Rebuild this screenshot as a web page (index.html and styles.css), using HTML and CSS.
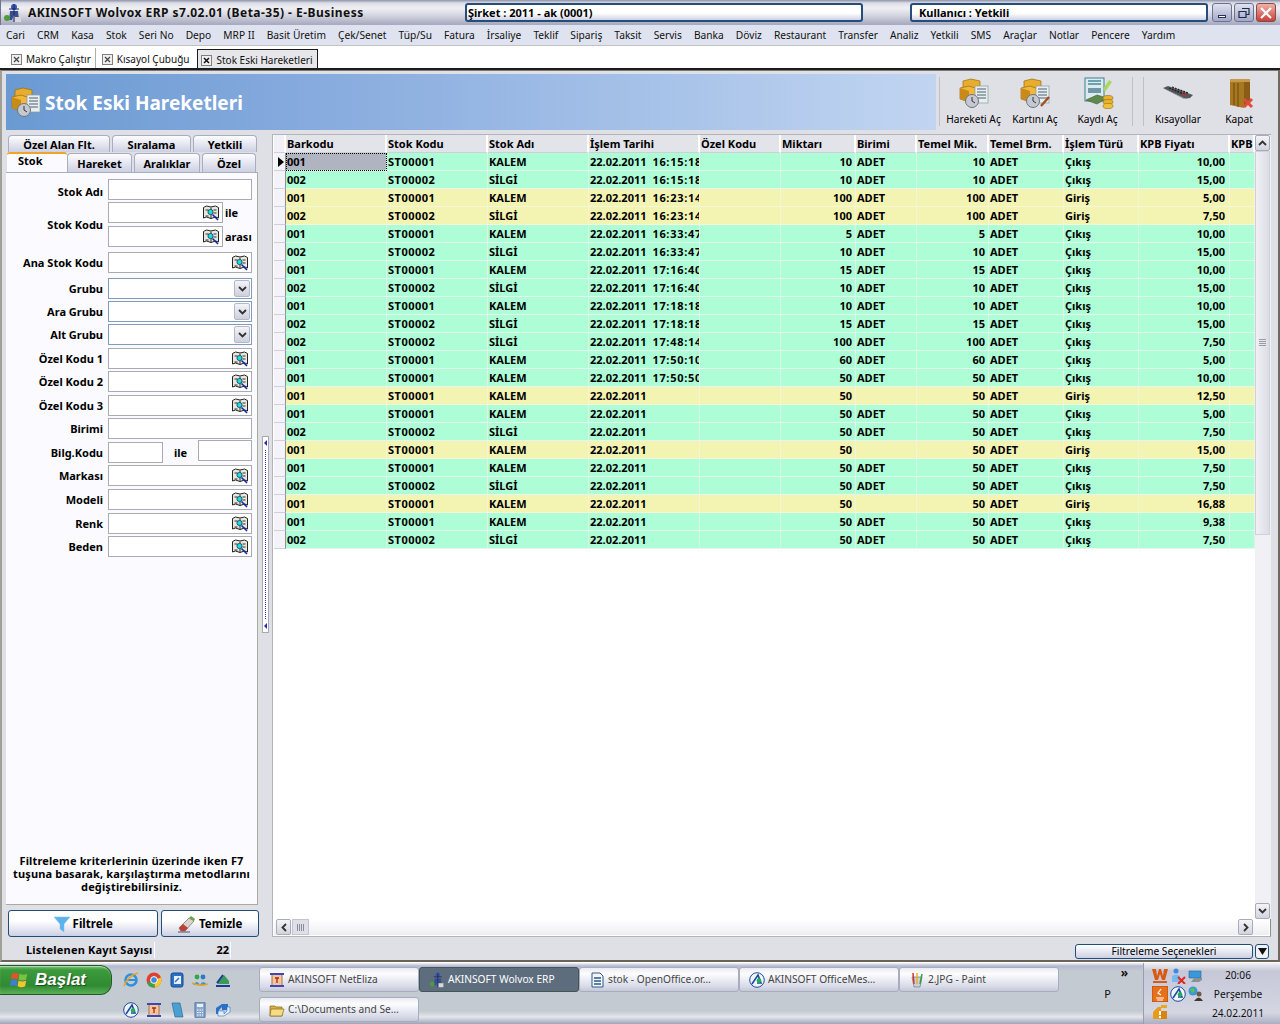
FILE: index.html
```html
<!DOCTYPE html>
<html lang="tr">
<head>
<meta charset="utf-8">
<title>AKINSOFT Wolvox ERP</title>
<link rel="stylesheet" href="styles.css">
</head>
<body>
<svg class="defs" width="0" height="0">
  <defs>
    <symbol id="i-find" viewBox="0 0 16 16">
      <path d="M.5 2.500l3-1.500 4.500 1 4.500-1 3 1.500V13l-3-1-4.500 1.500L3.500 12l-3 1z" fill="#e8e8e0" stroke="#222"/>
      <path d="M8 2.500v11M2.500 5h3M10.500 5h3M10.500 8h3M2.500 11h3" stroke="#333"/>
      <circle cx="7.500" cy="7" r="2.600" fill="#12e0ea" stroke="#222" stroke-width=".7"/>
      <path d="M9.500 9.500l5.500 5.500" stroke="#1428a8" stroke-width="1.600"/>
    </symbol>
    <symbol id="i-app" viewBox="0 0 20 20">
      <circle cx="11" cy="4" r="3" fill="#3a55b0"/>
      <path d="M7 8h8l1 9h-3l-2-5-2 5H6z" fill="#39508f"/>
      <path d="M11 1v18M6 6h10" stroke="#1b2a66"/>
      <circle cx="4" cy="15" r="3" fill="#4f9a3a"/>
      <rect x="12" y="14" width="6" height="5" fill="#d8d8d8"/>
    </symbol>
    <symbol id="i-boxes" viewBox="0 0 32 32">
      <path d="M13 2l9 2v9l-9 3-8-3V4z" fill="#e8ad2c" stroke="#9a6c10" stroke-width=".7"/>
      <path d="M2 11l9-2 9 3v10l-9 3-9-3z" fill="#f0b73a" stroke="#9a6c10" stroke-width=".7"/>
      <path d="M11 14v11l-9-3V11z" fill="#c98a1a"/>
      <rect x="17" y="9" width="13" height="17" fill="#e8eef0" stroke="#8a9aa0" stroke-width=".7"/>
      <path d="M19 12h9M19 15h9M19 18h9M19 21h9" stroke="#4a6070" stroke-width="1.200"/>
      <circle cx="14" cy="24" r="6.500" fill="#c4c8d0" stroke="#70747c"/>
      <path d="M14 20v4l3 2" stroke="#333" fill="none"/>
    </symbol>
    <symbol id="i-pen" viewBox="0 0 32 32">
      <use href="#i-boxes"/>
      <path d="M22 29l8-9" stroke="#a05020" stroke-width="2.400"/>
    </symbol>
    <symbol id="i-money" viewBox="0 0 32 32">
      <rect x="3" y="1" width="19" height="23" fill="#dcebf0" stroke="#3a8090"/>
      <path d="M6 4h13M6 7h13" stroke="#4a8a98" stroke-width="1.400"/>
      <path d="M6 11h13v5H6z" fill="#6f97a6"/>
      <path d="M21 12l6-9 3 2-7 10z" fill="#a8d860"/>
      <path d="M4 23l11-5 10 3-10 6z" fill="#5f8a4e" stroke="#3a5c30" stroke-width=".6"/>
      <ellipse cx="26" cy="21" rx="5" ry="2.600" fill="#e8b22c" stroke="#9a6c10" stroke-width=".6"/>
      <ellipse cx="26" cy="25" rx="5" ry="2.600" fill="#e8b22c" stroke="#9a6c10" stroke-width=".6"/>
      <ellipse cx="26" cy="29" rx="5" ry="2.600" fill="#f0c03a" stroke="#9a6c10" stroke-width=".6"/>
    </symbol>
    <symbol id="i-key" viewBox="0 0 32 32">
      <path d="M1 11l5-2 25 9-3 3-6 1z" fill="#55555c"/>
      <path d="M1 11l21 11 6-1-4 1z" fill="#b8b8bc"/>
      <path d="M7 11l17 7M10 10l16 6" stroke="#222" stroke-width="1.300" stroke-dasharray="2 1"/>
      <path d="M20 17l4 1.500" stroke="#c03030" stroke-width="1.400"/>
    </symbol>
    <symbol id="i-door" viewBox="0 0 32 32">
      <path d="M7 2h20v26H7z" fill="#8a5c18"/>
      <path d="M7 2l14 3v26L7 28z" fill="#a87820"/>
      <path d="M11 6v22M15 6v24" stroke="#6d4810"/>
      <path d="M7 2h20v3H7z" fill="#c69a4a"/>
      <path d="M21 22l8 8m0-8l-8 8" stroke="#e24a3a" stroke-width="3"/>
    </symbol>
    <symbol id="i-funnel" viewBox="0 0 16 16">
      <path d="M0 1h16l-6 7v8l-4-3V8z" fill="#5ab2ef" stroke="#7cc0f0" stroke-width=".5"/>
    </symbol>
    <symbol id="i-eraser" viewBox="0 0 18 18">
      <path d="M1 13l10-10 5 3-9 10H3z" fill="#d8d4cc" stroke="#555" stroke-width=".6"/>
      <path d="M11 3l2-2 4 3-1 2z" fill="#6aa838"/>
      <path d="M5 9l5 4-3 3H3l-2-3z" fill="#c04038"/>
      <path d="M0 17h12" stroke="#555"/>
    </symbol>
    <symbol id="i-win" viewBox="0 0 20 20">
      <path d="M2 3q3-2 7 0l-1 6q-4-2-7 0z" fill="#e8502a"/>
      <path d="M10 3q4 2 8 0l-1 6q-4 2-8 0z" fill="#7cc242"/>
      <path d="M1 10q3-2 7 0l-1 6q-4-2-7 0z" fill="#3d7fd8"/>
      <path d="M9 10q4 2 8 0l-1 6q-4 2-8 0z" fill="#f5c52a"/>
    </symbol>
    <symbol id="i-ie" viewBox="0 0 16 16">
      <circle cx="8" cy="8" r="5.500" fill="none" stroke="#2f8fe0" stroke-width="2.600"/>
      <path d="M3 8h10" stroke="#2f8fe0" stroke-width="2"/>
      <path d="M1 14C3 8 9 2 15 1" stroke="#e8a520" stroke-width="1.500" fill="none"/>
    </symbol>
    <symbol id="i-chrome" viewBox="0 0 16 16">
      <circle cx="8" cy="8" r="7.500" fill="#e0402f"/>
      <path d="M8 8L1 11a7.500 7.500 0 0 0 8 4.500z" fill="#3ea14a"/>
      <path d="M8 8l7-2.500a7.500 7.500 0 0 1-6 10z" fill="#f6c92d"/>
      <circle cx="8" cy="8" r="3.400" fill="#3a8ce0" stroke="#fff"/>
    </symbol>
    <symbol id="i-cal" viewBox="0 0 16 16">
      <rect x="2" y="1" width="12" height="14" rx="2" fill="#2a70c8" stroke="#184a90"/>
      <rect x="5" y="4" width="7" height="8" fill="#e8f0fa"/>
      <path d="M6 10l4-4" stroke="#2a70c8" stroke-width="1.500"/>
    </symbol>
    <symbol id="i-people" viewBox="0 0 16 16">
      <circle cx="5" cy="5" r="2.400" fill="#2fa84a"/>
      <circle cx="11" cy="5" r="2.400" fill="#2f78c8"/>
      <path d="M1 13q4-6 7 0zM8 13q3-6 7 0z" fill="#4a90c8"/>
      <path d="M0 11q8 4 16 1" stroke="#e8a520" stroke-width="1.500" fill="none"/>
    </symbol>
    <symbol id="i-tri" viewBox="0 0 16 16">
      <path d="M2 12L9 3l5 6v3z" fill="#3a9a58"/>
      <path d="M1 13h14v2H1z" fill="#1c3c90"/>
      <path d="M2 11L8 3" stroke="#1c3c90" stroke-width="2"/>
    </symbol>
    <symbol id="i-office" viewBox="0 0 16 16">
      <circle cx="8" cy="8" r="7.300" fill="#f0f4fa" stroke="#1c4ca0"/>
      <path d="M3 12L9 3l3 8H8" fill="none" stroke="#1c4ca0" stroke-width="1.600"/>
      <circle cx="10" cy="8.500" r="2.300" fill="#20b050"/>
    </symbol>
    <symbol id="i-scroll" viewBox="0 0 16 16">
      <rect x="3" y="2" width="10" height="12" fill="#f2c89a" stroke="#b07038"/>
      <path d="M1 2h14M1 14h14" stroke="#3a48c0" stroke-width="2"/>
      <path d="M6 6h4M8 6v5M6 11h.1M10 11h.1" stroke="#b02020" stroke-width="1.300"/>
    </symbol>
    <symbol id="i-note" viewBox="0 0 16 16">
      <path d="M3 1h8l3 14H6z" fill="#4aa0d0" stroke="#2a6a98" stroke-width=".7"/>
    </symbol>
    <symbol id="i-calc" viewBox="0 0 16 16">
      <rect x="3" y="0" width="10" height="16" rx="1" fill="#8aa8d0" stroke="#50709c"/>
      <rect x="5" y="2" width="6" height="3" fill="#e8f0f8"/>
      <path d="M5 8h6M5 10.500h6M5 13h6" stroke="#fff" stroke-dasharray="1.500 1"/>
    </symbol>
    <symbol id="i-sync" viewBox="0 0 16 16">
      <path d="M1 6l6-4 6 0v6H7v-3l-3 3v4H1z" fill="#2a70c8"/>
      <path d="M15 10l-6 4H3V9h6v3l3-3V5h3z" fill="#e8eef8" stroke="#2a70c8" stroke-width=".6"/>
    </symbol>
    <symbol id="i-folder" viewBox="0 0 16 16">
      <path d="M1 4h5l1 1h6v9H1z" fill="#d8b048" stroke="#8a6a18" stroke-width=".7"/>
      <path d="M2 7h13l-2 7H1z" fill="#f4dc84" stroke="#8a6a18" stroke-width=".7"/>
    </symbol>
    <symbol id="i-doc" viewBox="0 0 16 16">
      <path d="M3 1h8l3 3v11H3z" fill="#f4f6fa" stroke="#2a5a88"/>
      <path d="M5 6h7M5 9h7M5 12h7" stroke="#2a5a88" stroke-width="1.400"/>
    </symbol>
    <symbol id="i-paint" viewBox="0 0 16 16">
      <path d="M3 5h10l-2 10H5z" fill="#c8d0d8" stroke="#606870" stroke-width=".6"/>
      <path d="M5 12L4 1" stroke="#d83030" stroke-width="1.500"/>
      <path d="M8 12V1" stroke="#e8b020" stroke-width="1.500"/>
      <path d="M11 12l2-10" stroke="#30a040" stroke-width="1.500"/>
    </symbol>
    <symbol id="i-w" viewBox="0 0 16 16">
      <path d="M0 1h4l1 7 2-7h2l2 7 1-7h4l-3 11H10L8 6l-2 6H3z" fill="#d85a10"/>
      <path d="M1 13h14v2H1z" fill="#d85a10"/>
    </symbol>
    <symbol id="i-userx" viewBox="0 0 16 16">
      <circle cx="6" cy="3" r="2.500" fill="#3a8ce0"/>
      <path d="M2 14V8q4-3 8 0v6z" fill="#7ab8f0"/>
      <path d="M8 9l7 7m0-7l-7 7" stroke="#e02a20" stroke-width="2"/>
    </symbol>
    <symbol id="i-net" viewBox="0 0 16 16">
      <path d="M1 3h12v7H1z" fill="#3a98d8" stroke="#286898" stroke-width=".6"/>
      <path d="M6 10l-3 4h8l3-2v-2z" fill="#8a9098"/>
    </symbol>
    <symbol id="i-java" viewBox="0 0 16 16">
      <rect width="16" height="16" fill="#e8701a" stroke="#b04c08"/>
      <path d="M9 3L6 7l3 2M4 12h8M5 14h6" stroke="#fff" stroke-width="1.200" fill="none"/>
    </symbol>
    <symbol id="i-globe" viewBox="0 0 16 16">
      <circle cx="5" cy="5" r="4.500" fill="#3a98d8"/>
      <path d="M2 3l4-1 1 3-3 2z" fill="#5ac050"/>
      <circle cx="11" cy="8" r="2.500" fill="#6a5a48"/>
      <path d="M6 15q5-7 9 0z" fill="#403830"/>
    </symbol>
    <symbol id="i-alert" viewBox="0 0 16 16">
      <path d="M1 15V8l5-5h3v12z" fill="#e89a18"/>
      <path d="M9 15V7h6v8z" fill="#d88410"/>
      <path d="M9 1h6v3H9z" fill="#e8a820"/>
      <path d="M8 7v4M8 12v2" stroke="#fff" stroke-width="2"/>
    </symbol>
  </defs>
</svg>

<div class="screen">
  <header class="titlebar">
    <svg class="ti"><use href="#i-app"/></svg>
    <div class="apptitle">AKINSOFT Wolvox ERP s7.02.01 (Beta-35) - E-Business</div>
    <div class="pill company">Şirket : 2011 - ak (0001)</div>
    <div class="pill user">Kullanıcı : Yetkili</div>
    <div class="winbtns">
      <button class="wb"><span class="w-min"></span></button>
      <button class="wb"><svg class="wbi" viewBox="0 0 12 12"><path d="M4 1.500h7v6H8M1 4.500h7v6H1z" fill="none" stroke="#1c2a50" stroke-width="1.200"/></svg></button>
      <button class="wb close"><svg class="wbi" viewBox="0 0 12 12"><path d="M1 1l10 10m0-10L1 11" stroke="#fff" stroke-width="2.200"/></svg></button>
    </div>
  </header>

  <nav class="menubar">
    <span>Cari</span><span>CRM</span><span>Kasa</span><span>Stok</span><span>Seri No</span><span>Depo</span><span>MRP II</span><span>Basit Üretim</span><span>Çek/Senet</span><span>Tüp/Su</span><span>Fatura</span><span>İrsaliye</span><span>Teklif</span><span>Sipariş</span><span>Taksit</span><span>Servis</span><span>Banka</span><span>Döviz</span><span>Restaurant</span><span>Transfer</span><span>Analiz</span><span>Yetkili</span><span>SMS</span><span>Araçlar</span><span>Notlar</span><span>Pencere</span><span>Yardım</span>
  </nav>

  <div class="tabbar">
    <div class="dtab"><svg class="xbox" viewBox="0 0 11 11"><rect x=".5" y=".5" width="10" height="10" fill="#f0f0f0" stroke="#808080"/><path d="M3 3l5 5m0-5L3 8" stroke="#444" stroke-width="1.200"/></svg>Makro Çalıştır</div>
    <div class="dtab sep"><svg class="xbox" viewBox="0 0 11 11"><rect x=".5" y=".5" width="10" height="10" fill="#f0f0f0" stroke="#808080"/><path d="M3 3l5 5m0-5L3 8" stroke="#444" stroke-width="1.200"/></svg>Kısayol Çubuğu</div>
    <div class="dtab on"><svg class="xbox" viewBox="0 0 11 11"><rect x=".5" y=".5" width="10" height="10" fill="#f0f0f0" stroke="#808080"/><path d="M3 3l5 5m0-5L3 8" stroke="#111" stroke-width="1.500"/></svg>Stok Eski Hareketleri</div>
  </div>

  <main class="window">
    <section class="banner">
      <div class="bluehead">
        <svg class="headicon"><use href="#i-boxes"/></svg>
        <h1>Stok Eski Hareketleri</h1>
      </div>
      <div class="tools">
        <div class="tool t1"><svg><use href="#i-boxes"/></svg><span>Hareketi Aç</span></div>
        <div class="tool t2"><svg><use href="#i-pen"/></svg><span>Kartını Aç</span></div>
        <div class="tool t3"><svg><use href="#i-money"/></svg><span>Kaydı Aç</span></div>
        <div class="tool t4"><svg><use href="#i-key"/></svg><span>Kısayollar</span></div>
        <div class="tool t5"><svg><use href="#i-door"/></svg><span>Kapat</span></div>
      </div>
    </section>

    <section class="workarea">
      <aside class="filters">
        <div class="ftabs r1">
          <div class="ftab a1">Özel Alan Flt.</div><div class="ftab a2">Sıralama</div><div class="ftab a3">Yetkili</div>
        </div>
        <div class="ftabs r2">
          <div class="ftab b1 on">Stok</div><div class="ftab b2">Hareket</div><div class="ftab b3">Aralıklar</div><div class="ftab b4">Özel</div>
        </div>
        <div class="fbody">
          <form class="form">
            <div class="row"><label class="lbl low">Stok Adı</label><div class="inp"></div></div>
            <div class="group g2">
              <label class="lbl">Stok Kodu</label>
              <div class="pair">
                <div class="pairrow"><div class="inp short"><svg class="find"><use href="#i-find"/></svg></div><span class="after">ile</span></div>
                <div class="pairrow g3"><div class="inp short"><svg class="find"><use href="#i-find"/></svg></div><span class="after">arası</span></div>
              </div>
            </div>
            <div class="row g5"><label class="lbl">Ana Stok Kodu</label><div class="inp"><svg class="find"><use href="#i-find"/></svg></div></div>
            <div class="row g5"><label class="lbl">Grubu</label><div class="inp combo"><span class="drop"><svg viewBox="0 0 9 6"><path d="M1 1l3.500 3.500L8 1" fill="none" stroke="#333" stroke-width="1.800"/></svg></span></div></div>
            <div class="row g2"><label class="lbl">Ara Grubu</label><div class="inp combo"><span class="drop"><svg viewBox="0 0 9 6"><path d="M1 1l3.500 3.500L8 1" fill="none" stroke="#333" stroke-width="1.800"/></svg></span></div></div>
            <div class="row g2"><label class="lbl">Alt Grubu</label><div class="inp combo"><span class="drop"><svg viewBox="0 0 9 6"><path d="M1 1l3.500 3.500L8 1" fill="none" stroke="#333" stroke-width="1.800"/></svg></span></div></div>
            <div class="row g3"><label class="lbl">Özel Kodu 1</label><div class="inp"><svg class="find"><use href="#i-find"/></svg></div></div>
            <div class="row g2"><label class="lbl">Özel Kodu 2</label><div class="inp"><svg class="find"><use href="#i-find"/></svg></div></div>
            <div class="row g3"><label class="lbl">Özel Kodu 3</label><div class="inp"><svg class="find"><use href="#i-find"/></svg></div></div>
            <div class="row g2"><label class="lbl">Birimi</label><div class="inp"></div></div>
            <div class="row g3"><label class="lbl">Bilg.Kodu</label><div class="inp bilg"></div><span class="ile">ile</span><div class="inp bilg2"></div></div>
            <div class="row g2"><label class="lbl">Markası</label><div class="inp"><svg class="find"><use href="#i-find"/></svg></div></div>
            <div class="row g3"><label class="lbl">Modeli</label><div class="inp"><svg class="find"><use href="#i-find"/></svg></div></div>
            <div class="row g3"><label class="lbl">Renk</label><div class="inp"><svg class="find"><use href="#i-find"/></svg></div></div>
            <div class="row g2"><label class="lbl">Beden</label><div class="inp"><svg class="find"><use href="#i-find"/></svg></div></div>
          </form>
          <p class="hint">Filtreleme kriterlerinin üzerinde iken F7 tuşuna basarak, karşılaştırma metodlarını değiştirebilirsiniz.</p>
        </div>
        <div class="actions">
          <button class="act filter"><svg class="acti"><use href="#i-funnel"/></svg>Filtrele</button>
          <button class="act clear"><svg class="acti wide"><use href="#i-eraser"/></svg>Temizle</button>
        </div>
      </aside>

      <div class="splitter"><div class="grip"><i class="gl"></i><i class="gd"></i><i class="gl"></i></div></div>

      <section class="gridpanel">
        <div class="gridtop">
          <div class="gridwrap">
            <table class="grid">
              <colgroup><col class="c0"><col class="c1"><col class="c2"><col class="c3"><col class="c4"><col class="c5"><col class="c6"><col class="c7"><col class="c8"><col class="c9"><col class="c10"><col class="c11"><col class="c12"></colgroup>
              <thead><tr><th></th><th>Barkodu</th><th>Stok Kodu</th><th>Stok Adı</th><th>İşlem Tarihi</th><th>Özel Kodu</th><th>Miktarı</th><th>Birimi</th><th>Temel Mik.</th><th>Temel Brm.</th><th>İşlem Türü</th><th>KPB Fiyatı</th><th>KPB</th></tr></thead>
              <tbody>
                <tr class="g"><td class="ind cur"><i class="arrow"></i></td><td class="sel">001</td><td>ST00001</td><td>KALEM</td><td>22.02.2011 <span class="tm">16:15:18</span></td><td></td><td class="n">10</td><td>ADET</td><td class="n">10</td><td>ADET</td><td>Çıkış</td><td class="n">10,00</td><td></td></tr>
                <tr class="g"><td class="ind"></td><td>002</td><td>ST00002</td><td>SİLGİ</td><td>22.02.2011 <span class="tm">16:15:18</span></td><td></td><td class="n">10</td><td>ADET</td><td class="n">10</td><td>ADET</td><td>Çıkış</td><td class="n">15,00</td><td></td></tr>
                <tr class="y"><td class="ind"></td><td>001</td><td>ST00001</td><td>KALEM</td><td>22.02.2011 <span class="tm">16:23:14</span></td><td></td><td class="n">100</td><td>ADET</td><td class="n">100</td><td>ADET</td><td>Giriş</td><td class="n">5,00</td><td></td></tr>
                <tr class="y"><td class="ind"></td><td>002</td><td>ST00002</td><td>SİLGİ</td><td>22.02.2011 <span class="tm">16:23:14</span></td><td></td><td class="n">100</td><td>ADET</td><td class="n">100</td><td>ADET</td><td>Giriş</td><td class="n">7,50</td><td></td></tr>
                <tr class="g"><td class="ind"></td><td>001</td><td>ST00001</td><td>KALEM</td><td>22.02.2011 <span class="tm">16:33:47</span></td><td></td><td class="n">5</td><td>ADET</td><td class="n">5</td><td>ADET</td><td>Çıkış</td><td class="n">10,00</td><td></td></tr>
                <tr class="g"><td class="ind"></td><td>002</td><td>ST00002</td><td>SİLGİ</td><td>22.02.2011 <span class="tm">16:33:47</span></td><td></td><td class="n">10</td><td>ADET</td><td class="n">10</td><td>ADET</td><td>Çıkış</td><td class="n">15,00</td><td></td></tr>
                <tr class="g"><td class="ind"></td><td>001</td><td>ST00001</td><td>KALEM</td><td>22.02.2011 <span class="tm">17:16:40</span></td><td></td><td class="n">15</td><td>ADET</td><td class="n">15</td><td>ADET</td><td>Çıkış</td><td class="n">10,00</td><td></td></tr>
                <tr class="g"><td class="ind"></td><td>002</td><td>ST00002</td><td>SİLGİ</td><td>22.02.2011 <span class="tm">17:16:40</span></td><td></td><td class="n">10</td><td>ADET</td><td class="n">10</td><td>ADET</td><td>Çıkış</td><td class="n">15,00</td><td></td></tr>
                <tr class="g"><td class="ind"></td><td>001</td><td>ST00001</td><td>KALEM</td><td>22.02.2011 <span class="tm">17:18:18</span></td><td></td><td class="n">10</td><td>ADET</td><td class="n">10</td><td>ADET</td><td>Çıkış</td><td class="n">10,00</td><td></td></tr>
                <tr class="g"><td class="ind"></td><td>002</td><td>ST00002</td><td>SİLGİ</td><td>22.02.2011 <span class="tm">17:18:18</span></td><td></td><td class="n">15</td><td>ADET</td><td class="n">15</td><td>ADET</td><td>Çıkış</td><td class="n">15,00</td><td></td></tr>
                <tr class="g"><td class="ind"></td><td>002</td><td>ST00002</td><td>SİLGİ</td><td>22.02.2011 <span class="tm">17:48:14</span></td><td></td><td class="n">100</td><td>ADET</td><td class="n">100</td><td>ADET</td><td>Çıkış</td><td class="n">7,50</td><td></td></tr>
                <tr class="g"><td class="ind"></td><td>001</td><td>ST00001</td><td>KALEM</td><td>22.02.2011 <span class="tm">17:50:10</span></td><td></td><td class="n">60</td><td>ADET</td><td class="n">60</td><td>ADET</td><td>Çıkış</td><td class="n">5,00</td><td></td></tr>
                <tr class="g"><td class="ind"></td><td>001</td><td>ST00001</td><td>KALEM</td><td>22.02.2011 <span class="tm">17:50:50</span></td><td></td><td class="n">50</td><td>ADET</td><td class="n">50</td><td>ADET</td><td>Çıkış</td><td class="n">10,00</td><td></td></tr>
                <tr class="y"><td class="ind"></td><td>001</td><td>ST00001</td><td>KALEM</td><td>22.02.2011</td><td></td><td class="n">50</td><td></td><td class="n">50</td><td>ADET</td><td>Giriş</td><td class="n">12,50</td><td></td></tr>
                <tr class="g"><td class="ind"></td><td>001</td><td>ST00001</td><td>KALEM</td><td>22.02.2011</td><td></td><td class="n">50</td><td>ADET</td><td class="n">50</td><td>ADET</td><td>Çıkış</td><td class="n">5,00</td><td></td></tr>
                <tr class="g"><td class="ind"></td><td>002</td><td>ST00002</td><td>SİLGİ</td><td>22.02.2011</td><td></td><td class="n">50</td><td>ADET</td><td class="n">50</td><td>ADET</td><td>Çıkış</td><td class="n">7,50</td><td></td></tr>
                <tr class="y"><td class="ind"></td><td>001</td><td>ST00001</td><td>KALEM</td><td>22.02.2011</td><td></td><td class="n">50</td><td></td><td class="n">50</td><td>ADET</td><td>Giriş</td><td class="n">15,00</td><td></td></tr>
                <tr class="g"><td class="ind"></td><td>001</td><td>ST00001</td><td>KALEM</td><td>22.02.2011</td><td></td><td class="n">50</td><td>ADET</td><td class="n">50</td><td>ADET</td><td>Çıkış</td><td class="n">7,50</td><td></td></tr>
                <tr class="g"><td class="ind"></td><td>002</td><td>ST00002</td><td>SİLGİ</td><td>22.02.2011</td><td></td><td class="n">50</td><td>ADET</td><td class="n">50</td><td>ADET</td><td>Çıkış</td><td class="n">7,50</td><td></td></tr>
                <tr class="y"><td class="ind"></td><td>001</td><td>ST00001</td><td>KALEM</td><td>22.02.2011</td><td></td><td class="n">50</td><td></td><td class="n">50</td><td>ADET</td><td>Giriş</td><td class="n">16,88</td><td></td></tr>
                <tr class="g"><td class="ind"></td><td>001</td><td>ST00001</td><td>KALEM</td><td>22.02.2011</td><td></td><td class="n">50</td><td>ADET</td><td class="n">50</td><td>ADET</td><td>Çıkış</td><td class="n">9,38</td><td></td></tr>
                <tr class="g"><td class="ind"></td><td>002</td><td>ST00002</td><td>SİLGİ</td><td>22.02.2011</td><td></td><td class="n">50</td><td>ADET</td><td class="n">50</td><td>ADET</td><td>Çıkış</td><td class="n">7,50</td><td></td></tr>
              </tbody>
            </table>
          </div>
          <div class="vscroll">
            <span class="sb"><svg viewBox="0 0 9 6"><path d="M1 5l3.500-3.500L8 5" fill="none" stroke="#333" stroke-width="1.800"/></svg></span>
            <div class="vthumb"><i></i><i></i><i></i><i></i></div>
            <div class="sfill"></div>
            <span class="sb"><svg viewBox="0 0 9 6"><path d="M1 1l3.500 3.500L8 1" fill="none" stroke="#333" stroke-width="1.800"/></svg></span>
          </div>
        </div>
        <div class="hscroll">
          <span class="sb"><svg class="h" viewBox="0 0 6 9"><path d="M5 1L1.500 4.500 5 8" fill="none" stroke="#333" stroke-width="1.800"/></svg></span>
          <div class="hthumb"><i></i><i></i><i></i><i></i></div>
          <div class="sfill"></div>
          <span class="sb"><svg class="h" viewBox="0 0 6 9"><path d="M1 1l3.500 3.500L1 8" fill="none" stroke="#333" stroke-width="1.800"/></svg></span>
        </div>
      </section>
    </section>

    <footer class="status">
      <div class="st-label">Listelenen Kayıt Sayısı</div>
      <div class="st-num">22</div>
      <div class="st-fill"></div>
      <button class="st-btn">Filtreleme Seçenekleri</button>
      <button class="st-arrow"><svg viewBox="0 0 9 7"><path d="M0 0h9L4.500 7z" fill="#111"/></svg></button>
    </footer>
  </main>

  <footer class="taskbar">
    <div class="tb-left">
      <div class="startrow">
        <div class="start"><svg class="flag"><use href="#i-win"/></svg><span>Başlat</span></div>
        <div class="ql">
          <svg><use href="#i-ie"/></svg><svg><use href="#i-chrome"/></svg><svg><use href="#i-cal"/></svg><svg><use href="#i-people"/></svg><svg><use href="#i-tri"/></svg>
        </div>
      </div>
      <div class="ql second">
        <svg><use href="#i-office"/></svg><svg><use href="#i-scroll"/></svg><svg><use href="#i-note"/></svg><svg><use href="#i-calc"/></svg><svg><use href="#i-sync"/></svg>
      </div>
    </div>
    <div class="tasks">
      <div class="task"><svg><use href="#i-scroll"/></svg><span>AKINSOFT NetEliza</span></div>
      <div class="task on"><svg><use href="#i-app"/></svg><span>AKINSOFT Wolvox ERP</span></div>
      <div class="task"><svg><use href="#i-doc"/></svg><span>stok - OpenOffice.or…</span></div>
      <div class="task"><svg><use href="#i-office"/></svg><span>AKINSOFT OfficeMes…</span></div>
      <div class="task"><svg><use href="#i-paint"/></svg><span>2.JPG - Paint</span></div>
      <div class="task"><svg><use href="#i-folder"/></svg><span>C:\Documents and Se…</span></div>
    </div>
    <div class="tb-more"><span class="chev">»</span><span class="pp">P</span></div>
    <div class="tray">
      <div class="tray-icons">
        <svg><use href="#i-w"/></svg><svg><use href="#i-userx"/></svg><svg><use href="#i-net"/></svg>
        <svg><use href="#i-java"/></svg><svg><use href="#i-office"/></svg><svg><use href="#i-globe"/></svg>
        <svg><use href="#i-alert"/></svg>
      </div>
      <div class="clock"><span>20:06</span><span>Perşembe</span><span>24.02.2011</span></div>
    </div>
  </footer>
</div>
</body>
</html>
```

FILE: styles.css
```css
* { box-sizing: border-box; }
html, body { margin: 0; padding: 0; }
body { font: 11px/13px "Noto Sans", "Open Sans", sans-serif; color: #000; background: #fff; overflow: hidden; }
.defs { display: block; height: 0; width: 0; }
button { font: inherit; padding: 0; }
i { display: block; }
.screen { width: 1280px; height: 1024px; display: flex; flex-direction: column; overflow: hidden; }

/* title bar */
.titlebar { height: 25px; flex: none; display: flex; align-items: center; padding: 0 2px 0 2px; background: linear-gradient(#8e93ab 0, #dcdde6 3px, #f0f0f4 8px, #d6d7e0 15px, #a9acc1 24px); border-left: 1px solid #70748c; }
.ti { width: 20px; height: 20px; flex: none; margin-right: 5px; }
.apptitle { width: 437px; flex: none; font: bold 12px/16px "Noto Sans", sans-serif; color: #111; letter-spacing: .47px; white-space: nowrap; overflow: hidden; }
.pill { height: 19px; flex: none; border: 2px solid #254d7b; border-radius: 3px; background: linear-gradient(#fff 55%, #cfd2e4); font: bold 11px/15px "Noto Sans", sans-serif; }
.company { width: 398px; padding-left: 1px; }
.user { width: 298px; margin-left: 47px; padding-left: 7px; }
.winbtns { display: flex; gap: 2px; margin-left: 4px; }
.wb { width: 20px; height: 19px; border: 1px solid #6c7290; border-radius: 3px; background: linear-gradient(#dfe2ef, #a4a9c8); display: flex; align-items: center; justify-content: center; }
.w-min { width: 8px; height: 3px; background: #fff; margin-top: 8px; border: 1px solid #2a3050; }
.wbi { width: 12px; height: 12px; }
.close { background: linear-gradient(#eeb3a8, #c8403a); border-color: #8a4a48; }

/* menu */
.menubar { height: 21px; flex: none; display: flex; align-items: center; padding-left: 6px; gap: 12.08px; background: #dfe3ef; border-bottom: 1px solid #c2c2c2; white-space: nowrap; font-size: 10.2px; color: #111; }

/* document tabs */
.tabbar { height: 24px; flex: none; display: flex; align-items: flex-end; padding: 0 0 0 3px; background: #fff; border-bottom: 2px solid #1c1c1c; }
.dtab { height: 20px; display: flex; align-items: center; padding: 3px 4px 0 8px; font-size: 10px; color: #111; white-space: nowrap; }
.dtab.sep { border-left: 1px solid #b0b0a8; padding-left: 6px; padding-right: 8px; }
.dtab.on { background: #e7e7eb; border: 1px solid #1c1c1c; border-bottom: 0; height: 19px; padding: 2px 4px 0 3px; }
.xbox { width: 11px; height: 11px; margin-right: 4px; flex: none; }

/* window */
.window { height: 892px; flex: none; display: flex; flex-direction: column; padding: 3px 6px 0 4px; background: #dfdfe6; border-left: 2px solid #a0a098; border-right: 2px solid #6d6a62; border-bottom: 2px solid #6b6357; border-top: 1px solid #7a7a70; }
.banner { height: 56px; flex: none; display: flex; }
.bluehead { width: 930px; flex: none; display: flex; align-items: center; padding-left: 4px; background: linear-gradient(90deg, #6a9ad2, #84a9dd 30%, #c1d5f1); }
.headicon { width: 32px; height: 32px; flex: none; }
.bluehead h1 { margin: 2px 0 0 3px; color: #fff; font: bold 19px/24px "Noto Sans", sans-serif; }
.tools { flex: 1; display: flex; background: #dfdfe6; padding: 3px 0 0 3px; }
.tool { display: flex; flex-direction: column; align-items: center; height: 49px; font-size: 10.2px; line-height: 13px; white-space: nowrap; }
.tool svg { width: 32px; height: 32px; margin-bottom: 4px; flex: none; }
.t1 { width: 68px; border-left: 1px solid #c0c0c0; }
.t2 { width: 56px; }
.t3 { width: 70px; border-right: 1px solid #c0c0c0; }
.t4 { width: 69px; margin-left: 10px; border-left: 1px solid #c0c0c0; }
.t5 { width: 54px; }

.workarea { height: 810px; flex: none; display: flex; padding-top: 4px; }

/* filter panel */
.filters { width: 253px; flex: none; display: flex; flex-direction: column; }
.ftabs { display: flex; font: bold 11px/13px "Noto Sans", sans-serif; }
.r1 { height: 18px; padding-left: 2px; padding-top: 1px; gap: 2px; }
.r2 { height: 20px; padding-left: 1px; gap: 2px; }
.ftab { display: flex; align-items: center; justify-content: center; background: linear-gradient(#fdfdff, #cdd0e2); border: 1px solid #a9adc0; border-bottom: 0; border-radius: 4px 4px 0 0; white-space: nowrap; }
.a1 { width: 102px; }
.a2 { width: 79px; }
.a3 { width: 64px; }
.b1 { width: 60px; margin-right: -2px; }
.b2 { width: 65px; margin-top: 1px; }
.b3 { width: 66px; margin-top: 1px; }
.b4 { width: 54px; margin-top: 1px; }
.ftab.on { background: #fbfbff; border: 0; border-top: 2px solid #f0a428; border-radius: 3px 3px 0 0; align-items: flex-start; justify-content: flex-start; padding: 0 0 0 11px; position: relative; z-index: 1; }
.fbody { width: 252px; height: 733px; flex: none; display: flex; flex-direction: column; background: #fbfbff; border: 1px solid #a9ab9f; border-top: 1px solid #a9adc0; border-left: 0; padding-top: 6px; }
.form { display: flex; flex-direction: column; }
.row { height: 21px; display: flex; align-items: center; flex: none; }
.g2 { margin-top: 2px; }
.g3 { margin-top: 3px; }
.g5 { margin-top: 5px; }
.lbl { width: 97px; margin-right: 5px; flex: none; text-align: right; font-weight: 700; white-space: nowrap; }
.lbl.low { padding-top: 4px; }
.inp { width: 144px; height: 21px; flex: none; border: 1px solid #a8acb0; background: #fff; display: flex; align-items: center; justify-content: flex-end; padding-right: 3px; }
.inp.short { width: 115px; }
.find { width: 16px; height: 16px; }
.group { display: flex; align-items: center; }
.pairrow { display: flex; align-items: center; }
.after { font-weight: 700; margin-left: 2px; white-space: nowrap; }
.combo { border-color: #7f9db9; padding-right: 1px; }
.drop { width: 16px; height: 17px; border: 1px solid #b5b8c8; border-radius: 2px; background: linear-gradient(#f4f4f8, #cdd0dc); display: flex; align-items: center; justify-content: center; }
.drop svg { width: 9px; height: 6px; }
.inp.bilg { width: 55px; }
.ile { width: 35px; flex: none; text-align: center; font-weight: 700; margin-top: -1px; }
.inp.bilg2 { width: 54px; margin-top: -4px; }
.hint { margin: auto 5px 11px; text-align: center; font: bold 11px/13px "Noto Sans", sans-serif; letter-spacing: .14px; }
.actions { display: flex; gap: 3px; padding: 5px 0 0 2px; }
.act { height: 27px; border: 1px solid #1f4e7a; border-radius: 3px; background: linear-gradient(#fff 40%, #cdd0e4); display: flex; align-items: center; justify-content: center; font: bold 11.5px/14px "Noto Sans", sans-serif; }
.filter { width: 151px; }
.clear { width: 98px; }
.acti { width: 16px; height: 16px; margin-right: 3px; flex: none; }
.acti.wide { width: 18px; height: 18px; }

/* splitter */
.splitter { width: 13px; flex: none; display: flex; align-items: center; justify-content: center; padding-bottom: 6px; }
.grip { width: 7px; height: 197px; background: #fff; border: 1px solid #a8a8b0; display: flex; flex-direction: column; align-items: center; padding: 3px 0; }
.gd { flex: 1; width: 1px; margin: 4px 0; border-left: 1px dotted #2030a0; }
.gl { width: 0; height: 0; border: 3px solid transparent; border-right-color: #2030a0; border-left: 0; }

/* grid */
.gridpanel { width: 999px; height: 803px; flex: none; display: flex; flex-direction: column; background: #fff; border: 1px solid #b4b4b8; border-right-color: #8a8a90; padding: 0 1px 1px 1px; }
.gridtop { flex: 1; display: flex; min-height: 0; }
.gridwrap { width: 981px; flex: none; overflow: hidden; background: #fff; }
.grid { width: 981px; table-layout: fixed; border-collapse: separate; border-spacing: 0; font: bold 11px/17px "Noto Sans", sans-serif; }
.c0 { width: 12px; } .c1 { width: 101px; } .c2 { width: 101px; } .c3 { width: 101px; } .c4 { width: 111px; } .c5 { width: 81px; } .c6 { width: 75px; } .c7 { width: 61px; } .c8 { width: 72px; } .c9 { width: 75px; } .c10 { width: 75px; } .c11 { width: 91px; } .c12 { width: 25px; }
.grid th { height: 18px; padding: 0 0 0 1px; text-align: left; background: #e3e3ea; border-right: 2px solid #fff; border-bottom: 1px solid #cfcfd8; white-space: nowrap; overflow: hidden; font-weight: 700; }
.grid th:first-child { background: #f0f0f6; }
.grid td { height: 18px; padding: 0 0 0 1px; white-space: nowrap; overflow: hidden; border-right: 1px solid #ddf3e8; border-bottom: 1px solid #e4f6ee; }
.grid td:nth-child(3) { letter-spacing: .5px; }
.grid td:nth-child(5) { word-spacing: 3px; }
.tm { letter-spacing: .7px; }
.g td { background: #adfed6; }
.y td { background: #f4f4b2; border-right-color: #f4f4d6; border-bottom-color: #f6f6da; }
.grid td.n { text-align: right; padding: 0 3px 0 0; }
.grid td.n:nth-child(12) { padding-right: 4px; }
.grid td.ind { background: #f3f3f9; padding: 0; border-right: 1px solid #8e8e96; border-bottom: 1px solid #d0d0d8; }
.grid td.sel { background: #b0b3c0; outline: 1px dotted #000; outline-offset: -1px; }
.arrow { width: 0; height: 0; margin-left: 4px; border: 5px solid transparent; border-left: 6px solid #000; border-right: 0; }

/* scrollbars */
.vscroll { width: 16px; flex: none; display: flex; flex-direction: column; background: #f0f0f5; }
.sb { width: 15px; height: 16px; flex: none; border: 1px solid #aab; border-radius: 2px; background: linear-gradient(#f4f4f8, #d2d4de); display: flex; align-items: center; justify-content: center; }
.sb svg { width: 9px; height: 6px; }
.sb svg.h { width: 6px; height: 9px; }
.vthumb { height: 384px; flex: none; width: 15px; background: linear-gradient(90deg, #f0f0f5, #dcdce6); border: 1px solid #d0d0da; display: flex; flex-direction: column; align-items: center; justify-content: flex-end; gap: 1px; padding-bottom: 188px; }
.vthumb i { width: 7px; height: 1px; background: #9a9aa8; }
.sfill { flex: 1; }
.hscroll { height: 16px; flex: none; display: flex; padding-left: 2px; padding-right: 16px; background: linear-gradient(#fff, #eeeef2); }
.hthumb { width: 17px; height: 16px; flex: none; margin-left: 1px; background: #dfdfe8; border: 1px solid #c4c4d0; display: flex; align-items: center; justify-content: center; gap: 1px; }
.hthumb i { width: 1px; height: 7px; background: #8a8a98; }

/* status */
.status { height: 19px; flex: none; display: flex; align-items: center; font-weight: 700; }
.st-label { width: 149px; padding-left: 20px; white-space: nowrap; letter-spacing: .2px; border-right: 1px solid #fff; height: 16px; line-height: 16px; }
.st-num { width: 76px; text-align: right; padding-right: 1px; border-right: 1px solid #fff; height: 16px; line-height: 16px; }
.st-fill { flex: 1; }
.st-btn { width: 178px; height: 15px; margin-top: 4px; border: 1px solid #1f4e7a; border-radius: 3px; background: linear-gradient(#fff, #cdd0e4); font-weight: 400; font-size: 10.2px; line-height: 13px; }
.st-arrow { width: 14px; height: 15px; margin: 4px 3px 0 2px; border: 1px solid #1f4e7a; border-radius: 3px; background: #f0f0f6; display: flex; align-items: center; justify-content: center; }
.st-arrow svg { width: 9px; height: 7px; }

/* taskbar */
.taskbar { height: 62px; flex: none; margin-top: 1px; display: flex; background: linear-gradient(#f4f4f8 0, #b4b9d0 3px, #c3cad2 8px, #c3cad2 48px, #e4e6ea 54px, #9ea4b8 61px); font-size: 10.2px; }
.tb-left { width: 259px; flex: none; }
.startrow { display: flex; padding-top: 2px; height: 32px; }
.start { width: 112px; height: 30px; flex: none; border-radius: 0 12px 12px 0; background: linear-gradient(#74c26f, #3c9a3c 15%, #2f8a32 70%, #5bb058); border: 1px solid #1f5a22; border-left: 0; display: flex; align-items: center; padding-left: 10px; box-shadow: inset 0 1px 1px rgba(255,255,255,.5); }
.flag { width: 19px; height: 19px; margin-right: 6px; flex: none; }
.start span { color: #fff; font: italic bold 17px/22px "Liberation Sans", sans-serif; text-shadow: 1px 1px 1px #1a4a1a; }
.ql { display: flex; gap: 7px; padding-left: 11px; align-items: center; }
.ql svg { width: 16px; height: 16px; flex: none; }
.ql.second { padding: 7px 0 0 123px; }
.tasks { width: 800px; flex: none; display: flex; flex-wrap: wrap; align-content: flex-start; padding-top: 4px; row-gap: 5px; }
.task { width: 160px; height: 25px; flex: none; display: flex; align-items: center; padding-left: 9px; background: linear-gradient(#eaeaf2, #fdfdfe 25%, #d8dbe8 80%, #c4c8d8); border: 1px solid #a8acbc; border-radius: 3px; color: #444; white-space: nowrap; }
.task svg { width: 16px; height: 16px; margin-right: 3px; flex: none; }
.task.on { background: #5d6d7d; color: #fff; border-color: #455; }
.tb-more { width: 84px; flex: none; display: flex; flex-direction: column; align-items: flex-end; padding-right: 15px; }
.chev { font: bold 12px/14px "Noto Sans", sans-serif; margin-top: 3px; color: #111; }
.pp { margin-top: 7px; padding-right: 17px; font-size: 11px; color: #111; }
.tray { flex: 1; display: flex; background: linear-gradient(#f0f0f5, #c6c8d8 8px, #d4d6e2 50px, #a8acc0); border-left: 1px solid #9a9ab0; padding: 5px 0 0 8px; }
.tray-icons { width: 54px; height: 56px; flex: none; display: grid; grid-template-columns: repeat(3, 16px); grid-auto-rows: 16px; gap: 2px; }
.tray-icons svg { width: 16px; height: 16px; }
.clock { flex: 1; display: flex; flex-direction: column; align-items: center; gap: 6px; font-size: 10.2px; line-height: 13px; color: #111; padding: 1px 10px 0 0; }
```
